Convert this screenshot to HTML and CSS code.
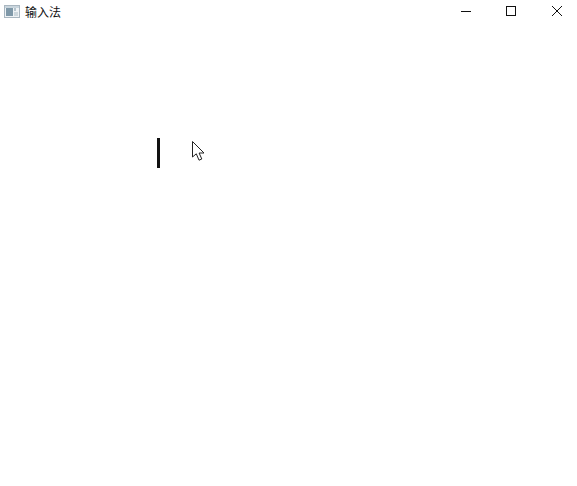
FILE: index.html
```html
<!DOCTYPE html>
<html lang="zh-CN">
<head>
    <meta charset="UTF-8">
    <title>输入法</title>
    <link rel="stylesheet" href="styles.css">
</head>
<body>
    <div class="titlebar">
        <svg class="app-icon" width="16" height="13" viewBox="0 0 16 13">
            <rect x="0.5" y="0.5" width="15" height="12" fill="#eef2f5" stroke="#a9b6c0"/>
            <rect x="1" y="1" width="14" height="2" fill="#c9d5dd"/>
            <rect x="2" y="3" width="7" height="8" fill="#7f98a8"/>
            <rect x="10" y="3" width="2" height="3" fill="#b5c3cc"/>
            <rect x="10" y="7" width="4" height="4" fill="#ccd6dc"/>
        </svg>
        <span class="title">输入法</span>
        <div class="controls">
            <svg class="control" width="46" height="22" viewBox="0 0 46 22">
                <path d="M19 11.5h10" stroke="#111" fill="none"/>
            </svg>
            <svg class="control" width="46" height="22" viewBox="0 0 46 22">
                <rect x="18.5" y="6.5" width="9" height="9" stroke="#111" fill="none"/>
            </svg>
            <svg class="control" width="46" height="22" viewBox="0 0 46 22">
                <path d="M18 6l10 10M28 6L18 16" stroke="#111" fill="none"/>
            </svg>
        </div>
    </div>
    <div class="canvas">
        <div class="caret"></div>
        <svg class="pointer" width="14" height="21" viewBox="0 0 14 21">
            <path d="M0.5 0.5v15.5l3.8-3.2 2.7 6.4 2.8-1.2-2.7-6h4.9z" fill="#fff" stroke="#222" stroke-linejoin="round"/>
        </svg>
    </div>
</body>
</html>
```

FILE: styles.css
```css
body {
    margin: 0;
    height: 486px;
    background-color: #fff;
    font-family: "Liberation Sans", "Noto Sans CJK SC", sans-serif;
    overflow: hidden;
}

.titlebar {
    display: flex;
    align-items: center;
    height: 22px;
    padding-left: 4px;
}

.app-icon {
    margin-right: 5px;
}

.title {
    font-size: 12px;
    color: #111;
}

.controls {
    display: flex;
    margin-left: auto;
    margin-right: -3px;
}

.control {
    display: block;
}

.canvas {
    display: flex;
    align-items: flex-start;
    gap: 32px;
    padding: 116px 0 0 157px;
}

.caret {
    width: 3px;
    height: 30px;
    background-color: #111;
}

.pointer {
    display: block;
    margin-top: 3px;
}
```
